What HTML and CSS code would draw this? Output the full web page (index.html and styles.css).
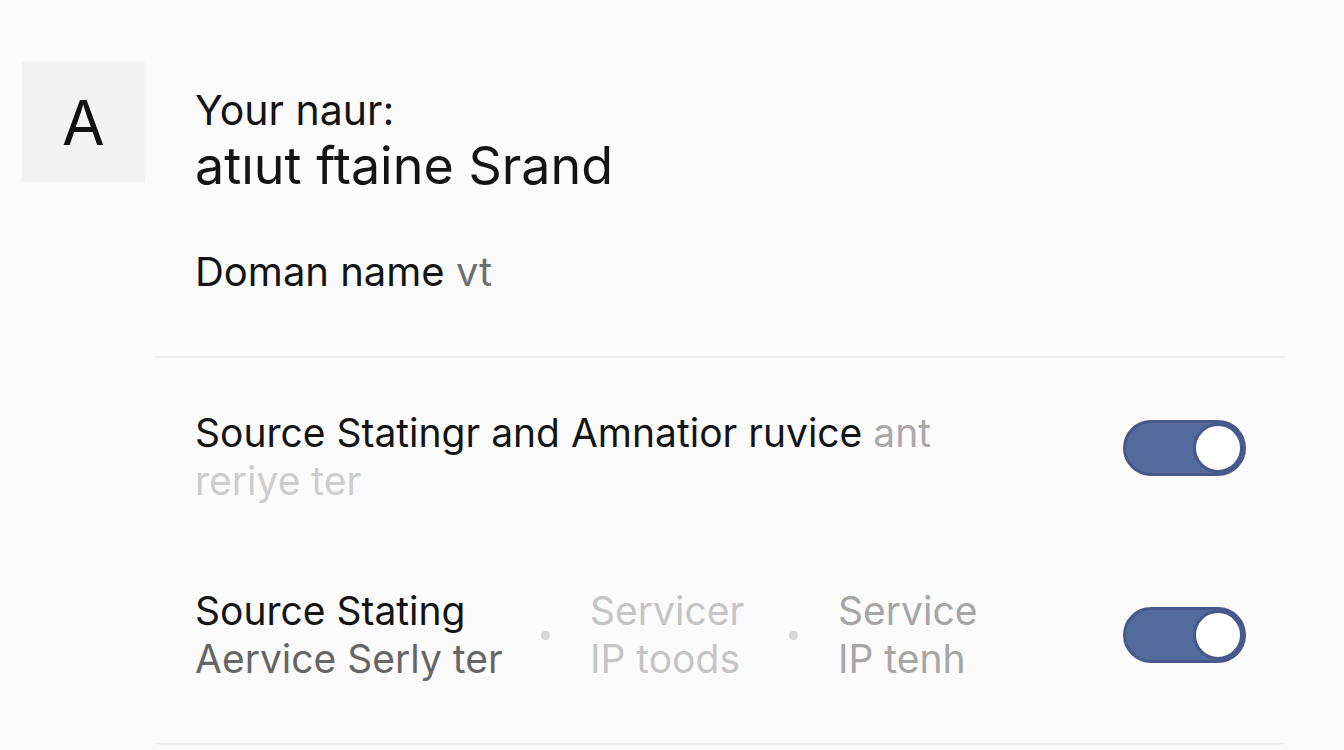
FILE: index.html
```html
<!DOCTYPE html>
<html lang="en">
<head>
    <meta charset="UTF-8" />
    <meta name="viewport" content="width=device-width, initial-scale=1.0" />
    <title>Domain settings</title>
    <link rel="stylesheet" href="styles.css">
</head>
<body>
    <div class="header">
        <div class="avatar">A</div>
        <div class="title-block">
            <div class="title-label">Your naur:</div>
            <div class="title-name">atıut ftaine Srand</div>
        </div>
    </div>
    <div class="domain">Doman name <span class="muted">vt</span></div>
    <div class="divider divider-top"></div>

    <div class="setting-row row-one">
        <div class="setting-text">
            Source Statingr and Amnatior ruvice <span class="faint">ant</span><br>
            <span class="fainter">reriye ter</span>
        </div>
        <div class="toggle"><span class="knob"></span></div>
    </div>

    <div class="setting-row row-two">
        <div class="setting-cols">
            <div class="col col-first">
                <div class="col-main">Source Stating</div>
                <div class="col-sub">Aervice Serly ter</div>
            </div>
            <span class="dot"></span>
            <div class="col col-light">
                <div>Servicer</div>
                <div>IP toods</div>
            </div>
            <span class="dot"></span>
            <div class="col col-mid">
                <div>Service</div>
                <div>IP tenh</div>
            </div>
        </div>
        <div class="toggle"><span class="knob"></span></div>
    </div>
    <div class="divider divider-bottom"></div>
</body>
</html>
```

FILE: styles.css
```css
/* Global */
body {
    margin: 0;
    background: #fbfbfb;
    font-family: Inter, 'Liberation Sans', Arial, sans-serif;
    color: #141414;
    overflow: hidden;
}

/* Header */
.header {
    display: flex;
    align-items: flex-start;
    padding: 62px 0 0 22px;
}

.avatar {
    width: 123px;
    height: 120px;
    background: #f3f3f3;
    display: flex;
    align-items: center;
    justify-content: center;
    font-size: 62px;
    color: #111;
}

.title-block {
    margin-left: 50px;
    margin-top: 23px;
}

.title-label {
    font-size: 41px;
    line-height: 51px;
}

.title-name {
    font-size: 52px;
    line-height: 60px;
}

/* Domain */
.domain {
    font-size: 40px;
    line-height: 50px;
    margin: 51px 0 0 195px;
}

.muted {
    color: #6f6f6f;
}

.divider {
    height: 2px;
    background: #efefef;
    margin: 0 59px 0 155px;
}

.divider-top {
    margin-top: 59px;
}

.divider-bottom {
    margin-top: 60px;
}

/* Settings */
.setting-row {
    display: flex;
    align-items: center;
    justify-content: space-between;
    padding: 0 98px 0 195px;
}

.row-one {
    margin-top: 51px;
    align-items: flex-start;
}

.row-one .toggle {
    margin-top: 11px;
}

.row-two {
    margin-top: 82px;
}

.setting-text {
    font-size: 39px;
    line-height: 48px;
}

.faint {
    color: #a9a9a9;
}

.fainter {
    color: #cdcdcd;
}

.setting-cols {
    display: flex;
    align-items: center;
    font-size: 39px;
    line-height: 48px;
    white-space: nowrap;
}

.col-first {
    width: 296px;
}

.col-sub {
    color: #666;
}

.col-light {
    width: 149px;
    color: #c5c5c5;
}

.col-mid {
    color: #a6a6a6;
}

.dot {
    width: 9px;
    height: 9px;
    border-radius: 50%;
    background: #d6d6d6;
    margin: 0 40px 0 50px;
}

/* Toggle */
.toggle {
    width: 117px;
    height: 50px;
    border-radius: 28px;
    background: #526b9c;
    border: 3px solid #46598a;
    display: flex;
    justify-content: flex-end;
    align-items: center;
}

.knob {
    width: 50px;
    height: 50px;
    border-radius: 50%;
    background: #fff;
    border: 3px solid #46598a;
    box-sizing: border-box;
}
```
